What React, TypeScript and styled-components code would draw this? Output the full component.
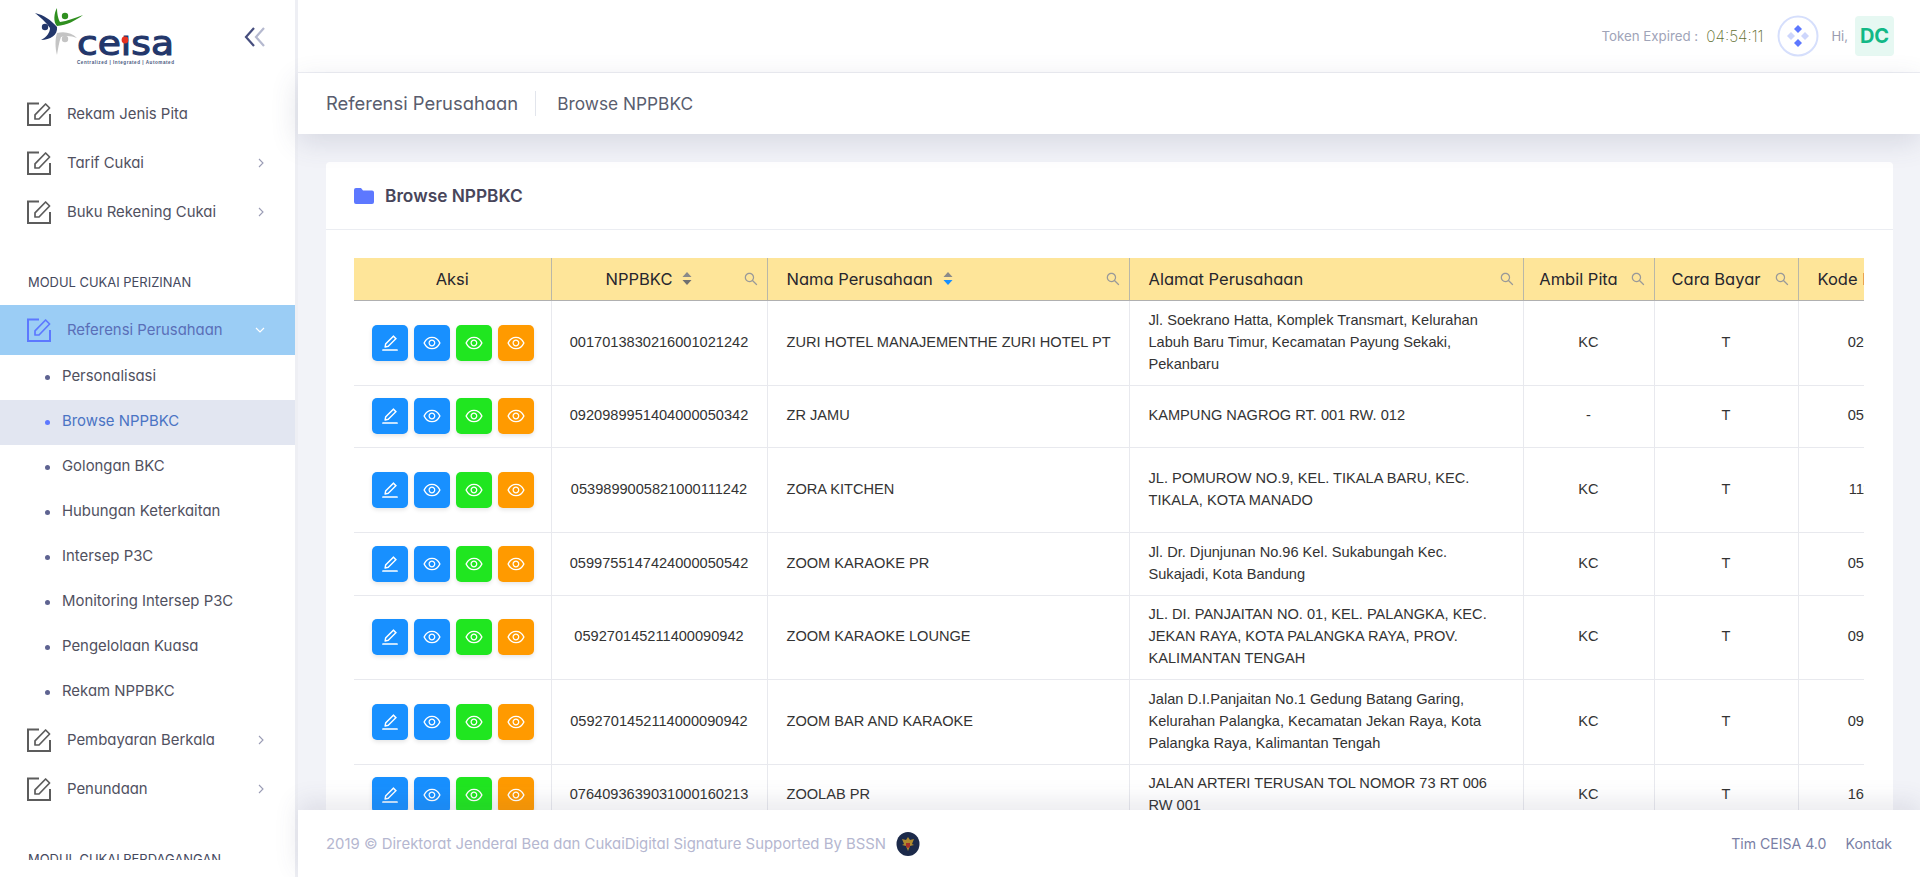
import { AiOutlineEdit, AiOutlineEye, AiOutlineSearch } from 'react-icons/ai';
import styled, { createGlobalStyle } from 'styled-components';

const GlobalStyle = createGlobalStyle`
  * {
    box-sizing: border-box;
  }
  html,
  body {
    margin: 0;
    height: 100%;
    overflow: hidden;
    background: #eeeff4;
    font-family: Inter, 'Liberation Sans', sans-serif;
    font-feature-settings: 'cv11';
  }
`;
const Page = styled.div`
  display: flex;
  height: 877px;
`;
const Sidebar = styled.aside`
  flex: 0 0 295px;
  display: flex;
  flex-direction: column;
  background: #fff;
`;
const Brand = styled.div`
  flex: 0 0 89px;
  display: flex;
  justify-content: space-between;
  align-items: flex-start;
  padding: 6px 29px 0 33px;
`;
const Collapse = styled.svg`
  margin-top: 20px;
`;
const Menu = styled.nav`
  flex: 0 0 771px;
  overflow: hidden;
`;
const MenuItem = styled.div<{ $active?: boolean }>`
  display: flex;
  align-items: center;
  height: ${(p) => (p.$active ? '50px' : '49.4px')};
  padding: 0 30px 0 27px;
  font-size: 14.9px;
  color: ${(p) => (p.$active ? '#5a6fb8' : '#51515f')};
  background: ${(p) => (p.$active ? '#9bcdf5' : 'transparent')};
  svg.lead {
    margin-right: 16px;
    flex: none;
    color: ${(p) => (p.$active ? '#5d78ff' : '#5c5c5c')};
  }
  svg.arrow {
    margin-left: auto;
    color: ${(p) => (p.$active ? '#fff' : '#9a9cb5')};
  }
`;
const MenuSection = styled.div`
  display: flex;
  align-items: center;
  height: 68px;
  padding: 22px 0 0 28px;
  font-size: 12.95px;
  color: #45495e;
  text-transform: uppercase;
`;
const SubItem = styled.div<{ $active?: boolean }>`
  display: flex;
  align-items: center;
  gap: 12px;
  height: 45px;
  padding: 0 0 3px 45px;
  font-size: 14.9px;
  color: ${(p) => (p.$active ? '#4b74c4' : '#51515f')};
  background: ${(p) => (p.$active ? '#e2e6f1' : 'transparent')};
  &::before {
    content: '';
    width: 5px;
    height: 5px;
    margin-top: 3px;
    border-radius: 50%;
    background: ${(p) => (p.$active ? '#5d78ff' : '#5e6391')};
  }
`;
const Main = styled.div`
  flex: 1;
  min-width: 0;
  margin-left: 3px;
  display: flex;
  flex-direction: column;
`;
const TopBar = styled.header`
  flex: 0 0 73px;
  display: flex;
  justify-content: flex-end;
  align-items: center;
  padding-right: 26px;
  background: #fff;
  border-bottom: 1px solid #eeeff4;
`;
const TokenLabel = styled.span`
  font-size: 13.3px;
  color: #a0a4b8;
  margin-right: 8px;
`;
const TokenTime = styled.span`
  font-size: 15.4px;
  font-weight: 200;
  color: #5f7030;
  margin-right: 14px;
`;
const Hi = styled.span`
  font-size: 13px;
  color: #9a9cb0;
  margin: 0 7px 0 12px;
`;
const Initials = styled.div`
  display: flex;
  align-items: center;
  justify-content: center;
  width: 39px;
  height: 40px;
  border-radius: 4px;
  background: #e6f8f2;
  color: #12b886;
  font-size: 20px;
  font-weight: 700;
`;
const SubHeader = styled.div`
  position: relative;
  z-index: 2;
  flex: 0 0 61px;
  display: flex;
  align-items: center;
  padding-left: 28px;
  background: #fff;
  box-shadow: 0 8px 28px rgba(70, 72, 110, 0.16);
  color: #595d6e;
`;
const Crumb = styled.span`
  padding-right: 17px;
  margin-right: 21px;
  border-right: 1px solid #e2e5ec;
  font-size: 18.4px;
  line-height: 25px;
  white-space: nowrap;
`;
const CrumbCurrent = styled.span`
  font-size: 17.3px;
`;
const Content = styled.main`
  flex: 1;
  min-height: 0;
  overflow: hidden;
  padding: 28px 27px 0 28px;
  background: #f2f3f8;
`;
const Card = styled.section`
  background: #fff;
  border-radius: 4px;
`;
const CardHead = styled.div`
  display: flex;
  align-items: center;
  gap: 11px;
  height: 68px;
  padding-left: 28px;
  border-bottom: 1px solid #ebedf2;
  font-size: 17.3px;
  font-weight: 600;
  color: #48465b;
`;
const CardBody = styled.div`
  padding: 28px 29px 0 28px;
`;
const TableWrap = styled.div`
  overflow: hidden;
  width: 1510px;
`;
const Table = styled.table`
  width: 1592px;
  table-layout: fixed;
  border-collapse: collapse;
`;
const Th = styled.th<{ $left?: boolean }>`
  position: relative;
  height: 42px;
  padding: 0 ${(p) => (p.$left ? '19px' : '20px 0 0')};
  background: #fee599;
  border-right: 1px solid #b9b7a8;
  border-bottom: 1px solid #b0b0b0;
  font-size: 16.5px;
  font-weight: 400;
  color: #26262e;
  text-align: ${(p) => (p.$left ? 'left' : 'center')};
  white-space: nowrap;
  &:first-child {
    padding: 0;
  }
`;
const ThInner = styled.span`
  display: inline-flex;
  align-items: center;
  gap: 10px;
`;
const SearchIcon = styled(AiOutlineSearch)`
  position: absolute;
  right: 8px;
  top: 13px;
  width: 16px;
  height: 16px;
  color: #999;
`;
const Td = styled.td<{ $left?: boolean; $nowrap?: boolean }>`
  padding: 0 ${(p) => (p.$left ? '19px' : '0')} 2px;
  border-right: 1px solid #e8e9ee;
  border-bottom: 1px solid #e8e9ee;
  font-family: 'Liberation Sans', Arial, sans-serif;
  font-size: 14.6px;
  line-height: 22px;
  color: #333;
  text-align: ${(p) => (p.$left ? 'left' : 'center')};
  white-space: ${(p) => (p.$nowrap ? 'nowrap' : 'normal')};
  font-feature-settings: normal;
`;
const Actions = styled.div`
  display: flex;
  justify-content: center;
  gap: 6px;
  padding: 2px 0 0 1px;
`;
const ActionButton = styled.button<{ $color: string }>`
  display: flex;
  align-items: center;
  justify-content: center;
  width: 36px;
  height: 36px;
  padding: 0;
  border: 0;
  border-radius: 5px;
  background: ${(p) => p.$color};
  color: #fff;
  font-size: 20px;
  box-shadow: 0 2px 4px rgba(0, 0, 0, 0.1);
`;
const Footer = styled.footer`
  position: relative;
  z-index: 2;
  flex: 0 0 67px;
  display: flex;
  align-items: center;
  padding: 0 28px;
  background: #fff;
  box-shadow: 0 -8px 24px rgba(70, 72, 110, 0.12);
  font-size: 14.9px;
  color: #b5b7d0;
`;
const FooterLinks = styled.div`
  margin-left: auto;
  display: flex;
  gap: 19px;
  font-size: 14.1px;
  color: #7a7fa5;
`;
const Emblem = styled.svg`
  margin-left: 10px;
`;

const Write = () => (
  <svg className="lead" width="24" height="24" viewBox="0 0 24 24" fill="none" stroke="currentColor">
    <path d="M12 1.5H1v21.5h22V12" strokeWidth="2" />
    <path d="M8 17v-4.2L18.6 2l4 4L12 17z" strokeWidth="1.7" strokeLinejoin="round" />
  </svg>
);
const ArrowRight = () => (
  <svg className="arrow" width="8" height="12" viewBox="0 0 8 12" fill="none" stroke="currentColor">
    <path d="M2 2l4 4-4 4" strokeWidth="1.1" />
  </svg>
);
const ArrowDown = () => (
  <svg className="arrow" width="10" height="10" viewBox="0 0 10 10" fill="none" stroke="currentColor">
    <path d="M1 3l4 4 4-4" strokeWidth="1.2" />
  </svg>
);
const Logo = () => (
  <svg width="144" height="60" viewBox="33 6 144 60">
    <path d="M35 13c9 2 16 7 22 14 1 8-7 13-16 13 6-3 9-8 9-12-4-6-10-11-15-15z" fill="#23376b" />
    <circle cx="45" cy="27" r="3.2" fill="#23376b" />
    <path d="M57 8c0 5 1 11 3 14 7-1 15-4 23-7-8 6-16 10-26 11-4-4-3-13 0-18z" fill="#2f8f1f" />
    <circle cx="65" cy="16" r="3.2" fill="#2f8f1f" />
    <path d="M57 55c-2-7-2-16 0-22 8-2 15 0 20 5-5-2-11-3-16-1-2 5-3 12-4 18z" fill="#c4c4c4" />
    <circle cx="65" cy="39" r="3.2" fill="#c4c4c4" />
    <text x="77" y="55" fontFamily="'DejaVu Sans', sans-serif" fontSize="33" fill="#23376b" stroke="#23376b" strokeWidth="1.1" textLength="97" lengthAdjust="spacingAndGlyphs">
      ceısa
    </text>
    <circle cx="125" cy="40" r="3.4" fill="#e8321f" />
    <text x="77" y="64" fontFamily="'Liberation Sans', sans-serif" fontWeight="700" fontSize="4.6" fill="#4a5a80" textLength="97" lengthAdjust="spacing">
      Centralized | Integrated | Automated
    </text>
  </svg>
);
const SortCaret = ({ up, down }: { up: string; down: string }) => (
  <svg width="10" height="15" viewBox="0 0 10 15">
    <path d="M5 1l4.5 5h-9z" fill={up} />
    <path d="M5 14L.5 9h9z" fill={down} />
  </svg>
);

type Row = { height: number; nppbkc: string; name: string; address: string; pita: string; bayar: string; kode: string };

const rows: Row[] = [
  { height: 85, nppbkc: '0017013830216001021242', name: 'ZURI HOTEL MANAJEMENTHE ZURI HOTEL PT', address: 'Jl. Soekrano Hatta, Komplek Transmart, Kelurahan Labuh Baru Timur, Kecamatan Payung Sekaki, Pekanbaru', pita: 'KC', bayar: 'T', kode: '020300' },
  { height: 62, nppbkc: '0920989951404000050342', name: 'ZR JAMU', address: 'KAMPUNG NAGROG RT. 001 RW. 012', pita: '-', bayar: 'T', kode: '050800' },
  { height: 85, nppbkc: '0539899005821000111242', name: 'ZORA KITCHEN', address: 'JL. POMUROW NO.9, KEL. TIKALA BARU, KEC. TIKALA, KOTA MANADO', pita: 'KC', bayar: 'T', kode: '111000' },
  { height: 63, nppbkc: '0599755147424000050542', name: 'ZOOM KARAOKE PR', address: 'Jl. Dr. Djunjunan No.96 Kel. Sukabungah Kec. Sukajadi, Kota Bandung', pita: 'KC', bayar: 'T', kode: '050500' },
  { height: 84, nppbkc: '059270145211400090942', name: 'ZOOM KARAOKE LOUNGE', address: 'JL. DI. PANJAITAN NO. 01, KEL. PALANGKA, KEC. JEKAN RAYA, KOTA PALANGKA RAYA, PROV. KALIMANTAN TENGAH', pita: 'KC', bayar: 'T', kode: '090100' },
  { height: 85, nppbkc: '0592701452114000090942', name: 'ZOOM BAR AND KARAOKE', address: 'Jalan D.I.Panjaitan No.1 Gedung Batang Garing, Kelurahan Palangka, Kecamatan Jekan Raya, Kota Palangka Raya, Kalimantan Tengah', pita: 'KC', bayar: 'T', kode: '090100' },
  { height: 62, nppbkc: '0764093639031000160213', name: 'ZOOLAB PR', address: 'JALAN ARTERI TERUSAN TOL NOMOR 73 RT 006 RW 001', pita: 'KC', bayar: 'T', kode: '160800' },
];

const columns = [197, 216, 362, 394, 131, 144, 148];

export default function App() {
  return (
    <Page>
      <GlobalStyle />
      <Sidebar>
        <Brand>
          <Logo />
          <Collapse width="22" height="22" viewBox="0 0 22 22" fill="none" strokeWidth="2.2">
            <path d="M10 2 2 11l8 9" stroke="#464e7e" />
            <path d="M20 2l-8 9 8 9" stroke="#b5b9cf" />
          </Collapse>
        </Brand>
        <Menu>
          <MenuItem><Write />Rekam Jenis Pita</MenuItem>
          <MenuItem><Write />Tarif Cukai<ArrowRight /></MenuItem>
          <MenuItem><Write />Buku Rekening Cukai<ArrowRight /></MenuItem>
          <MenuSection>Modul Cukai Perizinan</MenuSection>
          <MenuItem $active><Write />Referensi Perusahaan<ArrowDown /></MenuItem>
          <SubItem>Personalisasi</SubItem>
          <SubItem $active>Browse NPPBKC</SubItem>
          <SubItem>Golongan BKC</SubItem>
          <SubItem>Hubungan Keterkaitan</SubItem>
          <SubItem>Intersep P3C</SubItem>
          <SubItem>Monitoring Intersep P3C</SubItem>
          <SubItem>Pengelolaan Kuasa</SubItem>
          <SubItem>Rekam NPPBKC</SubItem>
          <MenuItem><Write />Pembayaran Berkala<ArrowRight /></MenuItem>
          <MenuItem><Write />Penundaan<ArrowRight /></MenuItem>
          <MenuSection>Modul Cukai Perdagangan</MenuSection>
        </Menu>
      </Sidebar>
      <Main>
        <TopBar>
          <TokenLabel>Token Expired :</TokenLabel>
          <TokenTime>04:54:11</TokenTime>
          <svg width="42" height="42" viewBox="0 0 42 42">
            <circle cx="21" cy="21" r="19.5" fill="none" stroke="#d6dffc" strokeWidth="2" />
            <path d="M21 10l4 4-4 4-4-4z" fill="#5d78ff" />
            <path d="M21 24l4 4-4 4-4-4z" fill="#5d78ff" />
            <path d="M14 17l4 4-4 4-4-4z" fill="#cdd6fc" />
            <path d="M28 17l4 4-4 4-4-4z" fill="#cdd6fc" />
          </svg>
          <Hi>Hi,</Hi>
          <Initials>DC</Initials>
        </TopBar>
        <SubHeader>
          <Crumb>Referensi Perusahaan</Crumb>
          <CrumbCurrent>Browse NPPBKC</CrumbCurrent>
        </SubHeader>
        <Content>
          <Card>
            <CardHead>
              <svg width="20" height="16" viewBox="0 0 20 16">
                <path d="M0 2a2 2 0 0 1 2-2h5l2 2.5h9a2 2 0 0 1 2 2V14a2 2 0 0 1-2 2H2a2 2 0 0 1-2-2z" fill="#5d78ff" />
              </svg>
              Browse NPPBKC
            </CardHead>
            <CardBody>
              <TableWrap>
                <Table>
                  <colgroup>
                    {columns.map((w, i) => (
                      <col key={i} style={{ width: w }} />
                    ))}
                  </colgroup>
                  <thead>
                    <tr>
                      <Th>Aksi</Th>
                      <Th>
                        <ThInner>NPPBKC <SortCaret up="#8a8a8a" down="#707070" /></ThInner>
                        <SearchIcon />
                      </Th>
                      <Th $left>
                        <ThInner>Nama Perusahaan <SortCaret up="#8a8a8a" down="#1890ff" /></ThInner>
                        <SearchIcon />
                      </Th>
                      <Th $left>Alamat Perusahaan<SearchIcon /></Th>
                      <Th>Ambil Pita<SearchIcon /></Th>
                      <Th>Cara Bayar<SearchIcon /></Th>
                      <Th $left>Kode Kantor<SearchIcon /></Th>
                    </tr>
                  </thead>
                  <tbody>
                    {rows.map((r) => (
                      <tr key={r.nppbkc + r.name} style={{ height: r.height }}>
                        <Td>
                          <Actions>
                            <ActionButton $color="#1890ff"><AiOutlineEdit /></ActionButton>
                            <ActionButton $color="#1890ff"><AiOutlineEye /></ActionButton>
                            <ActionButton $color="#20e620"><AiOutlineEye /></ActionButton>
                            <ActionButton $color="#ff9a00"><AiOutlineEye /></ActionButton>
                          </Actions>
                        </Td>
                        <Td>{r.nppbkc}</Td>
                        <Td $left $nowrap>{r.name}</Td>
                        <Td $left>{r.address}</Td>
                        <Td>{r.pita}</Td>
                        <Td>{r.bayar}</Td>
                        <Td>{r.kode}</Td>
                      </tr>
                    ))}
                  </tbody>
                </Table>
              </TableWrap>
            </CardBody>
          </Card>
        </Content>
        <Footer>
          2019 © Direktorat Jenderal Bea dan CukaiDigital Signature Supported By BSSN
          <Emblem width="24" height="24" viewBox="0 0 24 24">
            <ellipse cx="12" cy="12" rx="11.5" ry="12" fill="#1c2a4a" />
            <path d="M12 5l2 3 4-1-2 5 2 1-4 1-2 5-2-5-4-1 2-1-2-5 4 1z" fill="#b08a2e" />
            <path d="M10 11h4v4l-2 1-2-1z" fill="#a8322a" />
          </Emblem>
          <FooterLinks>
            <span>Tim CEISA 4.0</span>
            <span>Kontak</span>
          </FooterLinks>
        </Footer>
      </Main>
    </Page>
  );
}
